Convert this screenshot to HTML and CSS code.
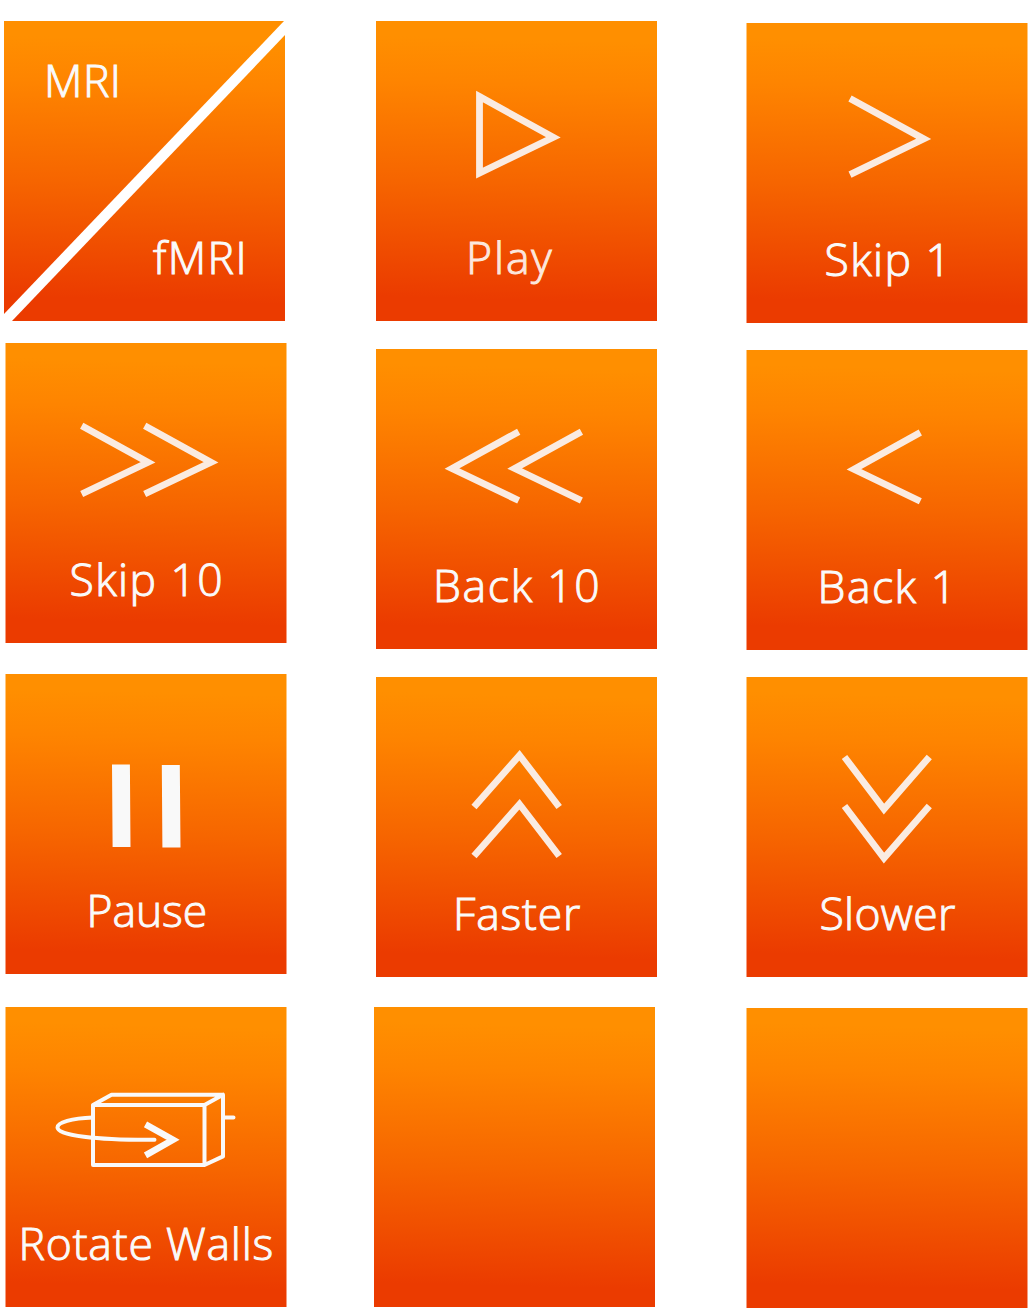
FILE: index.html
```
<!DOCTYPE html>
<html lang="en">
<head>
<meta charset="utf-8">
<title>Controls</title>
<link rel="stylesheet" href="styles.css">
</head>
<body>
<main class="pad">
  <div class="column column-left">
    <button class="tile tile-mri">
      <svg class="split" viewBox="0 0 281 300"><path d="M280 0H281.5V13.5L8 300H0V293Z"/></svg>
      <span class="label mri">MRI</span>
      <span class="label fmri">fMRI</span>
    </button>
    <button class="tile">
      <svg class="icon" viewBox="0 0 281 205"><path d="M76.2 82.7 142.5 119.2 76.2 151M139.2 82.7 205.5 119.2 139.2 151"/></svg>
      <span class="label skip-ten">Skip 10</span>
    </button>
    <button class="tile">
      <svg class="icon solid" viewBox="0 0 281 205"><path d="M106.5 90.6H124.4L125 173.1H107.1ZM156.3 91H174.3L175 173.4H156.9Z"/></svg>
      <span class="label pause">Pause</span>
    </button>
    <button class="tile">
      <svg class="icon walls" viewBox="0 -0.4 281 205">
        <path d="M87.5 97.6H199V157.6H87.5ZM87.5 97.6 106 87.3H217.5V149L199 157.6M199 97.6 217.5 87.3M217.5 110.2H228"/>
        <path d="M87.5 110.2C66 111 52 115 52 120C52 128 90 132.8 149 132.4"/>
        <path class="head" d="M140 117 167.5 132.3 140 148"/>
      </svg>
      <span class="label rotate">Rotate Walls</span>
    </button>
  </div>
  <div class="column column-middle">
    <button class="tile">
      <svg class="icon" viewBox="0 0 281 205"><path d="M103.5 75.6 177.3 116.3 103.5 152Z"/></svg>
      <span class="label play">Play</span>
    </button>
    <button class="tile">
      <svg class="icon" viewBox="0 0 281 205"><path d="M142.7 82.7 76 119.5 142.7 151.5M205.4 82.7 138.7 119.5 205.4 151.5"/></svg>
      <span class="label back-ten">Back 10</span>
    </button>
    <button class="tile">
      <svg class="icon" viewBox="0 0 281 205"><path d="M98 130 143.5 78.3 183.2 130M98 179 143.5 127.3 183.2 179"/></svg>
      <span class="label faster">Faster</span>
    </button>
    <button class="tile tile-blank"></button>
  </div>
  <div class="column column-right">
    <button class="tile">
      <svg class="icon" viewBox="0 0.3 281 205"><path d="M103.5 75.7 177.3 116.2 103.5 151.9"/></svg>
      <span class="label skip-one">Skip 1</span>
    </button>
    <button class="tile">
      <svg class="icon" viewBox="0 0 281 205"><path d="M173.8 82.5 107.5 119.3 173.8 151.2"/></svg>
      <span class="label back-one">Back 1</span>
    </button>
    <button class="tile">
      <svg class="icon" viewBox="0 0 281 205"><path d="M98 80 137.5 132 182.8 80M98 129 137.5 181 182.8 129"/></svg>
      <span class="label slower">Slower</span>
    </button>
    <button class="tile"></button>
  </div>
</main>
</body>
</html>
```
FILE: styles.css
```
body {
  margin: 0;
  background: #fff;
  font-family: "Open Sans", "Noto Sans", sans-serif;
}

.pad {
  display: flex;
  align-items: flex-start;
  width: 1028px;
  height: 1308px;
  overflow: hidden;
}

.column {
  display: grid;
  flex: none;
  width: 281px;
}

.column-left {
  row-gap: 30px;
  padding: 21px 0 0 6px;
  grid-template-rows: 292px 301px 303px 300px;
  transform: translateX(-0.5px);
}

.column-middle {
  margin-left: 89px;
  padding-top: 21px;
  row-gap: 28px;
  grid-template-rows: 300px 300px 302px 300px;
}

.column-right {
  margin-left: 90px;
  padding-top: 23px;
  row-gap: 27px;
  grid-template-rows: 300px 300px 304px 300px;
  transform: translateX(-0.5px);
}

.tile {
  display: flex;
  flex-direction: column;
  box-sizing: border-box;
  width: 281px;
  height: 300px;
  padding: 0;
  border: 0;
  background: linear-gradient(181.5deg, #ff8f00 7%, #fe8400 22%, #f66500 54%, #eb3b00 92%);
  font: inherit;
}

.tile-mri {
  position: relative;
  margin-left: -2px;
  transform: translateX(0.5px);
}

.tile-blank {
  margin-left: -2px;
}

.split {
  position: absolute;
  inset: 0;
  fill: #fff;
}

.icon {
  display: block;
  flex: none;
  width: 281px;
  height: 205px;
  fill: none;
  stroke: #faebe1;
  stroke-width: 6.8;
  stroke-miterlimit: 8;
}

.solid {
  fill: #f9f9f9;
  stroke: none;
}

.walls {
  stroke: #f9f9f9;
  stroke-width: 4;
  stroke-linejoin: round;
  stroke-linecap: round;
}

.head {
  stroke-width: 6.5;
  stroke-linejoin: miter;
  stroke-linecap: butt;
}

.label {
  box-sizing: border-box;
  font-size: 44.5px;
  font-weight: 300;
  line-height: 62px;
  color: #fafafa;
  -webkit-text-stroke: 1px currentColor;
  text-align: left;
  white-space: nowrap;
}

.mri { margin-top: 28px; padding-left: 40px; letter-spacing: 0.5px; }
.fmri { margin-top: 115px; padding-left: 149px; letter-spacing: 1.4px; }
.skip-ten { padding-left: 64px; letter-spacing: 1.4px; }
.pause { padding-left: 81px; letter-spacing: -0.1px; }
.rotate { padding-left: 13px; letter-spacing: 0.8px; }
.play { padding-left: 90px; color: #fce7dd; letter-spacing: 1.9px; }
.back-ten { padding-left: 57px; letter-spacing: 1.7px; }
.faster { padding-left: 77px; letter-spacing: 0.8px; }
.skip-one { padding-left: 78px; letter-spacing: 1.4px; }
.back-one { padding-left: 71px; letter-spacing: 1.5px; }
.slower { padding-left: 73px; letter-spacing: 0.3px; }
```
